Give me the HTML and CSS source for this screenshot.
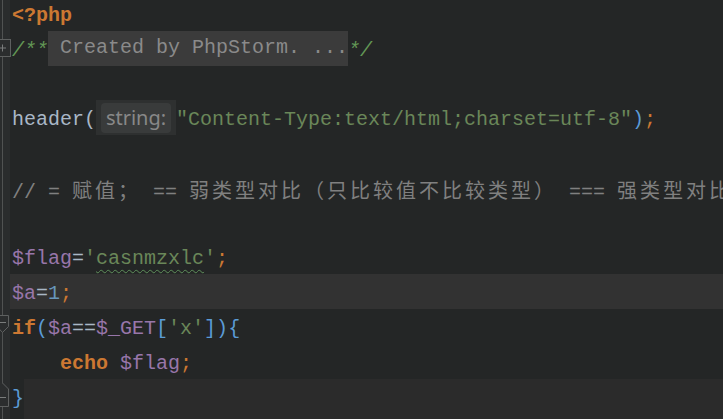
FILE: index.html
```html
<!DOCTYPE html>
<html>
<head>
<meta charset="utf-8">
<link rel="stylesheet" href="styles.css">
</head>
<body>
<div class="editor">
  <div class="gutter">
    <div class="g"></div>
    <div class="g">
      <svg class="mark" width="12" height="35" viewBox="0 0 12 35"><rect x="-8.5" y="8.5" width="19" height="17" fill="#2b2d2e" stroke="#5e6060"/><path d="M-1 17H6M2.5 13.5V20.5" stroke="#7a7c7c"/></svg>
    </div>
    <div class="g"></div>
    <div class="g"></div>
    <div class="g"></div>
    <div class="g"></div>
    <div class="g"></div>
    <div class="g"></div>
    <div class="g"></div>
    <div class="g">
      <svg class="mark" width="12" height="35" viewBox="0 0 12 35"><path d="M-8.5 6.5H8.5V17.5L2.5 23.5L-3 17.5" fill="#2b2d2e" stroke="#5e6060"/><path d="M-1 13.5H6" stroke="#7a7c7c"/></svg>
    </div>
    <div class="g"></div>
    <div class="g">
      <svg class="mark" width="12" height="35" viewBox="0 0 12 35"><path d="M2.5 4L8.5 10V27.5H-8.5V10L-3 4" fill="#2b2d2e" stroke="#5e6060"/><path d="M-1 18.5H6" stroke="#7a7c7c"/></svg>
    </div>
  </div>
  <div class="code">
    <div class="ln"><span class="kw">&lt;?php</span></div>
    <div class="ln"><span class="doc">/**</span><span class="fold"> Created by PhpStorm. ...</span><span class="doc">*/</span></div>
    <div class="ln"></div>
    <div class="ln">header(<span class="inlay"><span class="inlay-in">string:</span></span><span class="str">"Content-Type:text/html;charset=utf-8"</span><span class="br">)</span><span class="semi">;</span></div>
    <div class="ln"></div>
    <div class="ln"><span class="cmt">// = <span class="cjk">赋值；</span> == <span class="cjk">弱类型对比（只比较值不比较类型）</span> === <span class="cjk">强类型对比</span></span></div>
    <div class="ln"></div>
    <div class="ln"><span class="var">$flag</span>=<span class="str">'<span class="typo">casnmzxlc</span>'</span><span class="semi">;</span></div>
    <div class="ln current"><span class="var">$a</span>=<span class="num">1</span><span class="semi">;</span></div>
    <div class="ln"><span class="kw">if</span><span class="br">(</span><span class="var">$a</span>==<span class="var">$_GET</span><span class="br">[</span><span class="str">'x'</span><span class="br">])</span><span class="br">{</span></div>
    <div class="ln">    <span class="kw">echo</span> <span class="var">$flag</span><span class="semi">;</span></div>
    <div class="ln tail"><span class="br">}</span></div>
  </div>
</div>
</body>
</html>
```
FILE: styles.css
```css
html, body {
  margin: 0;
  padding: 0;
  background: #242626;
  overflow: hidden;
}

.editor {
  display: flex;
  height: 419px;
  overflow: hidden;
}

.gutter {
  width: 10px;
  flex: none;
  margin-top: -4px;
  background:
    linear-gradient(to right, transparent 2px, #505252 2px, #505252 3px, transparent 3px),
    #2a2c2d;
  position: relative;
  z-index: 1;
}

.g {
  height: 34.8px;
}

.mark {
  display: block;
  overflow: visible;
}

.code {
  flex: 1;
  display: flex;
  flex-direction: column;
  margin-top: -4px;
  min-width: 0;
  overflow: hidden;
  font-family: "Liberation Mono", "DejaVu Sans Mono", monospace;
  font-size: 20px;
  color: #a9b7c6;
}

.ln {
  box-sizing: border-box;
  height: 34.8px;
  line-height: 34.8px;
  padding-top: 2.8px;
  padding-left: 2px;
  white-space: pre;
  flex: none;
}

.ln.current {
  background: #323232;
}

.ln.tail {
  flex: 1;
  background: linear-gradient(to right, transparent 14px, #2b2b2b 14px);
}

.kw {
  color: #cc7832;
  font-weight: bold;
}

.doc {
  color: #629755;
  font-style: italic;
}

.fold {
  display: inline-block;
  background: #3b3b3b;
  color: #8a8a8a;
  height: 34.8px;
  margin-top: -2.8px;
  vertical-align: top;
}

.inlay {
  display: inline-flex;
  align-items: center;
  justify-content: center;
  width: 80px;
  height: 34.8px;
  margin-top: -2.8px;
  vertical-align: top;
  background: #2e3030;
}

.inlay-in {
  display: block;
  background: #393b3b;
  border-radius: 4px;
  padding: 0 5px;
  height: 30px;
  line-height: 30px;
  font-family: "Noto Sans", "Open Sans", sans-serif;
  font-size: 20px;
  color: #888888;
}

.str {
  color: #6a8759;
}

.typo {
  text-decoration: underline wavy #5e8f5a;
  text-decoration-thickness: 1px;
  text-underline-offset: 5px;
}

.br {
  color: #5b9bd5;
}

.semi {
  color: #cc7832;
}

.var {
  color: #9876aa;
}

.num {
  color: #6897bb;
}

.cmt {
  color: #808080;
}

.cjk {
  font-family: "Noto Sans CJK SC", sans-serif;
  font-size: 20px;
  letter-spacing: 3px;
}
```
